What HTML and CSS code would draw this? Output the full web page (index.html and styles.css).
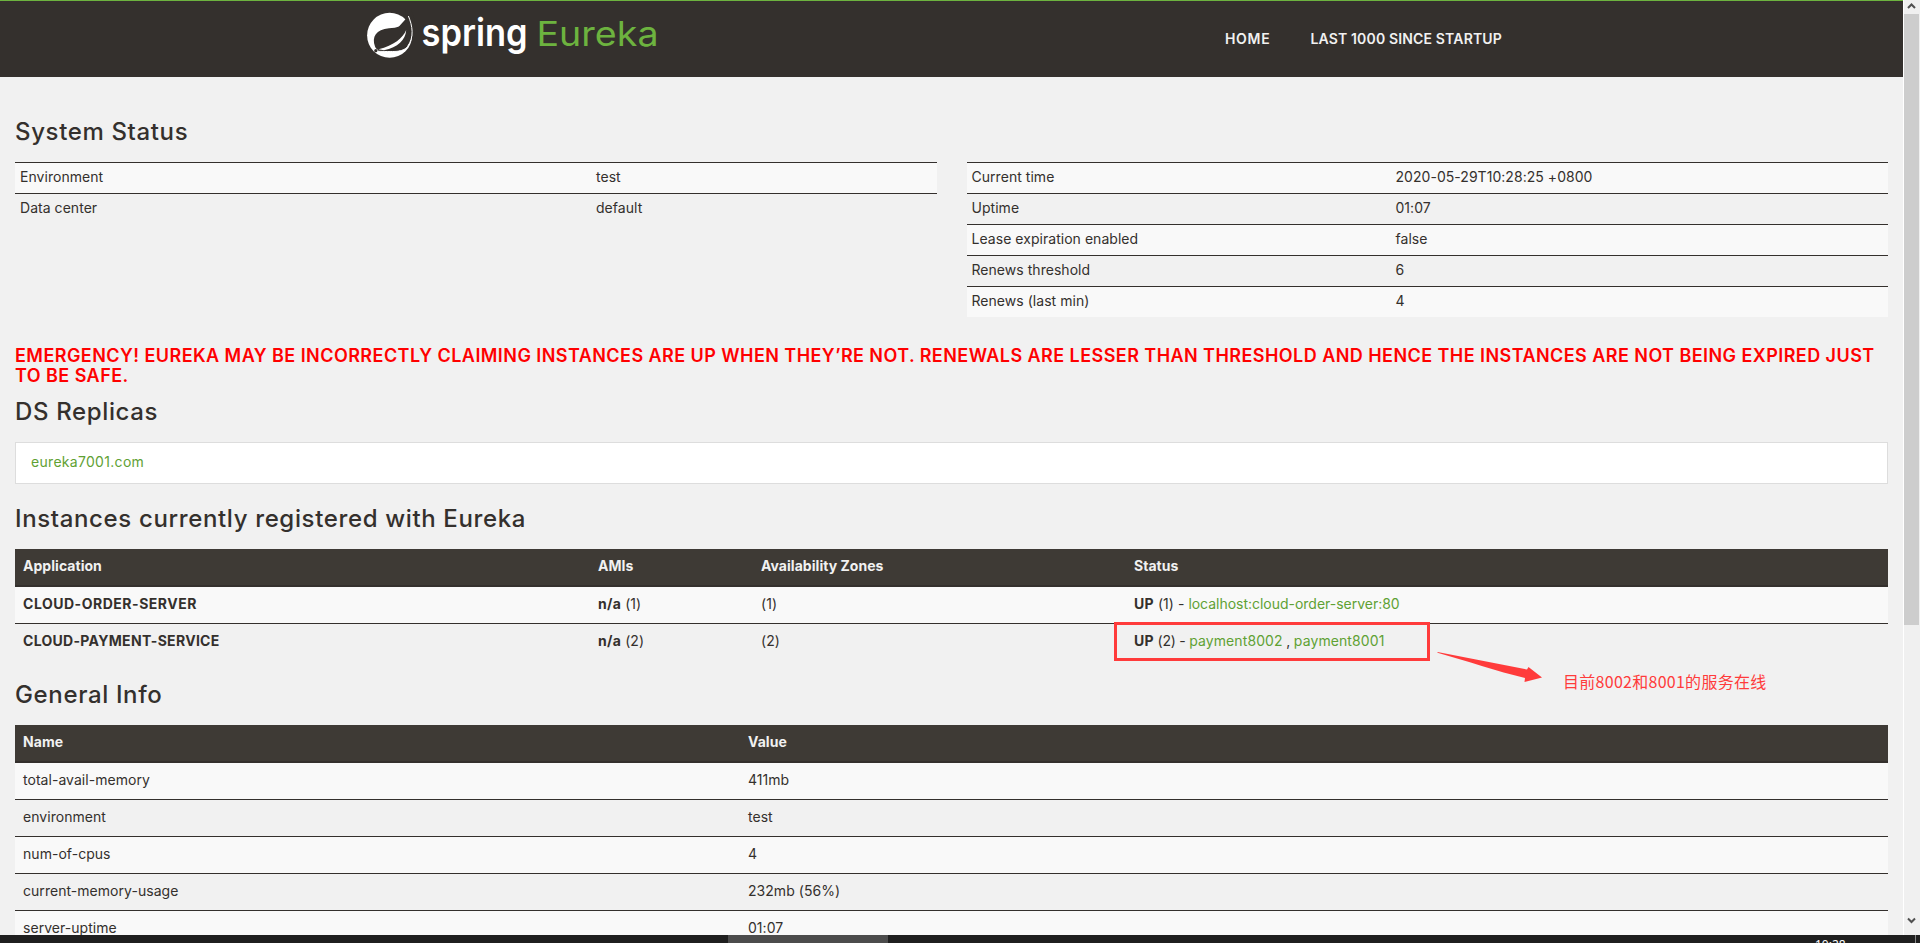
FILE: index.html
```
<!DOCTYPE html>
<html lang="en">
<head>
<meta charset="utf-8">
<title>Eureka</title>
<link rel="stylesheet" href="styles.css">
</head>
<body>
<div class="screen">
  <div class="viewport">
    <div class="page">
      <header class="navbar">
        <a class="brand">
          <svg class="brand-logo" width="300" height="60" viewBox="0 0 300 60">
            <circle cx="22.6" cy="34.3" r="22.5" fill="#fff"/>
            <path d="M36 13 L41.1 14.5 L44 24 L48 20 L44 8 L38 8 L39.5 16.5 Z" fill="#34302d"/>
            <path d="M41.4 15 C45.5 25 47.5 36 40.5 45.5 C37 50 31 51.5 10 50" fill="#34302d" stroke="#fff" stroke-width="1"/>
            <path d="M41 18 C37 25 30 27 22 27.3 C9 28.5 4.5 36 8 45.500 C9.5 49 11.5 49.5 15 49.6 C28 50.5 36 49.5 39.8 44.5 C45.5 37 44.5 27 41 18 Z" fill="#34302d"/>
            <path d="M39.2 29 C36 37 27 44.500 11.5 48.200 L17 49.3 C31 46.5 38.5 39 39.2 29 Z" fill="#fff"/>
            <circle cx="8.8" cy="49.7" r="1.6" fill="#34302d"/>
            <text class="word-spring" x="54.5" y="45" textLength="106" lengthAdjust="spacingAndGlyphs">spring</text>
            <text class="word-eureka" x="169.5" y="44.8" textLength="122" lengthAdjust="spacingAndGlyphs">Eureka</text>
          </svg>
        </a>
        <nav class="menu">
          <a class="menu-link home">Home</a>
          <a class="menu-link">Last 1000 since startup</a>
        </nav>
      </header>

      <main class="content">
        <h1 class="title">System Status</h1>
        <div class="status">
          <table class="info left">
            <tr><td class="key">Environment</td><td>test</td></tr>
            <tr><td class="key">Data center</td><td>default</td></tr>
          </table>
          <table class="info right">
            <tr><td class="key">Current time</td><td>2020-05-29T10:28:25 +0800</td></tr>
            <tr><td class="key">Uptime</td><td>01:07</td></tr>
            <tr><td class="key">Lease expiration enabled</td><td>false</td></tr>
            <tr><td class="key">Renews threshold</td><td>6</td></tr>
            <tr><td class="key">Renews (last min)</td><td>4</td></tr>
          </table>
        </div>

        <h4 class="emergency">EMERGENCY! EUREKA MAY BE INCORRECTLY CLAIMING INSTANCES ARE UP WHEN THEY’RE NOT. RENEWALS ARE LESSER THAN THRESHOLD AND HENCE THE INSTANCES ARE NOT BEING EXPIRED JUST TO BE SAFE.</h4>

        <h1 class="title">DS Replicas</h1>
        <div class="replicas"><a class="link">eureka7001.com</a></div>

        <h1 class="title instances-title">Instances currently registered with Eureka</h1>
        <table class="grid">
          <thead>
            <tr><th class="c-app">Application</th><th class="c-ami">AMIs</th><th class="c-zone">Availability Zones</th><th>Status</th></tr>
          </thead>
          <tbody>
            <tr><td><b class="order">CLOUD-ORDER-SERVER</b></td><td><b class="na">n/a</b> (1)</td><td>(1)</td><td><b>UP</b> (1) - <a class="link">localhost:cloud-order-server:80</a></td></tr>
            <tr><td><b>CLOUD-PAYMENT-SERVICE</b></td><td><b class="na">n/a</b> (2)</td><td>(2)</td><td class="tight"><b>UP</b> (2) - <a class="link pay">payment8002</a> , <a class="link pay">payment8001</a></td></tr>
          </tbody>
        </table>

        <h1 class="title general-title">General Info</h1>
        <table class="grid">
          <thead>
            <tr><th class="c-name">Name</th><th>Value</th></tr>
          </thead>
          <tbody>
            <tr><td>total-avail-memory</td><td>411mb</td></tr>
            <tr><td>environment</td><td>test</td></tr>
            <tr><td>num-of-cpus</td><td>4</td></tr>
            <tr><td>current-memory-usage</td><td>232mb (56%)</td></tr>
            <tr><td>server-uptime</td><td>01:07</td></tr>
          </tbody>
        </table>
      </main>
    </div>

    <div class="scrollbar">
      <svg class="arrow" width="15" height="14" viewBox="0 0 15 14"><path d="M4 8 L7.5 4.5 L11 8" fill="none" stroke="#505050" stroke-width="2"/></svg>
      <div class="thumb"></div>
      <svg class="arrow" width="15" height="14" viewBox="0 0 15 14"><path d="M4 4.5 L7.5 8 L11 4.5" fill="none" stroke="#505050" stroke-width="2"/></svg>
    </div>
  </div>

  <footer class="taskbar">
    <div class="task"></div>
    <div class="clock">10:28</div>
    <div class="show-desktop"></div>
  </footer>

  <div class="mark-box"></div>
  <svg class="mark-arrow" width="106" height="34" viewBox="0 0 106 34"><path d="M0.5 2 L90 19.5 L91.5 17 L105 27.5 L87.5 32 L88 28 C60 21.5 30 11 0.5 2.8 Z" fill="#ff3b3b"/></svg>
  <div class="mark-text">目前8002和8001的服务在线</div>
</div>
</body>
</html>
```
FILE: styles.css
```
* { box-sizing: border-box; }

body {
  margin: 0;
  overflow: hidden;
  background: #f1f1f1;
  color: #34302d;
  font: 14px/20px Inter, "Noto Sans", sans-serif;
}

.screen {
  position: relative;
  display: flex;
  flex-direction: column;
  height: 943px;
  overflow: hidden;
}

.viewport { display: flex; height: 935px; overflow: hidden; }
.page { flex: 1; min-width: 0; height: 935px; overflow: hidden; }

/* Navigation bar */
.navbar {
  display: flex;
  justify-content: space-between;
  height: 77px;
  padding: 0 401px 0 367px;
  border-top: 1px solid #6db33f;
  background: #34302d;
}
.brand-logo { display: block; }
.word-spring { fill: #fff; font: 600 38px Inter, sans-serif; }
.word-eureka { fill: #6db33f; font: 400 34px Inter, sans-serif; }
.menu { display: flex; gap: 40px; padding-top: 28px; }
.menu-link {
  color: #f1f1f1;
  font-weight: 600;
  letter-spacing: .16px;
  text-transform: uppercase;
}
.home { letter-spacing: .7px; }

/* Headings */
.content { padding: 42px 15px 0; }
.title {
  margin: 0 0 17px;
  font-size: 24px;
  font-weight: 500;
  line-height: 26px;
  letter-spacing: .64px;
}
.instances-title { margin-top: 22px; }
.general-title { margin-top: 22px; }

.emergency {
  margin: 29px 0 13px;
  color: #f00;
  font-size: 18px;
  font-weight: 600;
  line-height: 20px;
  letter-spacing: .44px;
}

/* Tables */
table { width: 100%; border-collapse: collapse; table-layout: fixed; }

.status { display: flex; align-items: flex-start; gap: 30px; height: 155px; }
.info { border-collapse: separate; border-spacing: 0; }
.info td { height: 31px; padding: 4px 5px 6px; border-top: 1px solid #34302d; }
.info tr:nth-child(odd), .grid tbody tr:nth-child(odd) { background: #f9f9f9; }
.left .key { width: 576px; }
.right .key { width: 424px; }
.info, .grid { letter-spacing: .04px; }

.replicas {
  height: 42px;
  padding: 9px 15px 11px;
  border: 1px solid #ddd;
  background: #fff;
}
.link { color: #5fa134; }
.replicas .link { letter-spacing: .3px; }
.grid .link { letter-spacing: -.02px; }
.grid .pay { letter-spacing: .1px; }

.grid { border-collapse: separate; border-spacing: 0; }
.grid th, .grid td { padding: 7px 8px 9px; text-align: left; }
.grid .tight { letter-spacing: -.25px; }
.grid th {
  height: 38px;
  border-bottom: 2px solid #34302d;
  background: #3e3a35;
  color: #f1f1f1;
  font-weight: 700;
}
.grid tbody tr + tr td { border-top: 1px solid #34302d; }
.grid b { letter-spacing: .3px; }
.grid .order { letter-spacing: .52px; }
.c-app { width: 575px; }
.c-ami { width: 163px; }
.c-zone { width: 373px; }
.c-name { width: 725px; }

/* Scrollbar */
.scrollbar {
  display: flex;
  flex-direction: column;
  width: 17px;
  border-left: 1px solid #fff;
  background: #f0f0f0;
}
.thumb { width: 15px; height: 611px; margin-bottom: 289px; background: #cdcdcd; }
.arrow { display: block; flex: none; }

/* Taskbar */
.taskbar {
  display: flex;
  height: 8px;
  overflow: hidden;
  background: #1f1f1f;
}
.task { width: 160px; margin-left: 728px; background: #4c4c4c; }
.clock {
  width: 100px;
  margin-left: 927px;
  padding-top: 2px;
  color: #fff;
  font: 12px/16px "Noto Sans", sans-serif;
}
.show-desktop { width: 5px; border-left: 1px solid #888; }

/* Annotations over the page */
.mark-box {
  position: absolute;
  left: 1114px;
  top: 622px;
  width: 316px;
  height: 39px;
  border: 3px solid #ff3b3b;
}
.mark-arrow { position: absolute; left: 1437px; top: 650px; }
.mark-text {
  position: absolute;
  left: 1563px;
  top: 671px;
  color: #ff3b3b;
  font: 16px/20px "Noto Sans CJK SC", sans-serif;
  letter-spacing: .28px;
  white-space: nowrap;
}
```
